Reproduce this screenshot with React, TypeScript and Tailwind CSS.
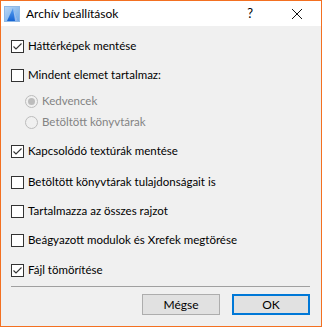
import React from 'react';

function Check({ checked }: { checked?: boolean }) {
  return (
    <span className="w-[13px] h-[13px] border border-[#333333] bg-white shrink-0 flex items-center justify-center">
      {checked && (
        <svg width="11" height="11" viewBox="0 0 11 11">
          <polyline points="1.5,5.5 4,8 9.5,2.5" fill="none" stroke="#333333" strokeWidth="1.1" />
        </svg>
      )}
    </span>
  );
}

function Radio({ checked }: { checked?: boolean }) {
  return (
    <span className="w-[13px] h-[13px] rounded-full border border-[#bcbcbc] bg-[#f0f0f0] shrink-0 flex items-center justify-center">
      {checked && <span className="w-[7px] h-[7px] rounded-full bg-[#bcbcbc]" />}
    </span>
  );
}

function CheckRow({ label, checked, className }: { label: string; checked?: boolean; className?: string }) {
  return (
    <div className={`h-4 flex items-center gap-[4px] ${className ?? ''}`}>
      <Check checked={checked} />
      <span className="text-[11.5px] text-black whitespace-nowrap leading-none">{label}</span>
    </div>
  );
}

function RadioRow({ label, checked, className }: { label: string; checked?: boolean; className?: string }) {
  return (
    <div className={`h-4 flex items-center gap-[4px] pl-[14px] ${className ?? ''}`}>
      <Radio checked={checked} />
      <span className="text-[11.5px] text-[#838383] whitespace-nowrap leading-none">{label}</span>
    </div>
  );
}

export default function App() {
  return (
    <div className="w-[322px] h-[327px] border border-[#f37021] flex flex-col bg-[#f0f0f0] font-['Lato','Noto_Sans',sans-serif]">
      {/* Title bar */}
      <div className="h-[25px] bg-white flex items-center shrink-0">
        <svg width="16" height="16" viewBox="0 0 16 16" className="ml-[3px]">
          <defs>
            <linearGradient id="g" x1="0" y1="0" x2="1" y2="1">
              <stop offset="0" stopColor="#bcd8f5" />
              <stop offset="1" stopColor="#6aa6e6" />
            </linearGradient>
            <linearGradient id="t" x1="0" y1="0" x2="0" y2="1">
              <stop offset="0" stopColor="#5aa0f0" />
              <stop offset="1" stopColor="#1464d4" />
            </linearGradient>
          </defs>
          <rect x="0.5" y="0.5" width="15" height="15" fill="url(#g)" stroke="#8fb8e6" />
          <path d="M3 15 L9 2 L14 15 Z" fill="url(#t)" />
          <path d="M9 2 L14 15 L11 15 Z" fill="#ffffff" opacity="0.5" />
        </svg>
        <span className="ml-[6px] text-[12px] text-black">Archív beállítások</span>
        <span className="ml-auto text-[13px] text-black mr-[38px]">?</span>
        <svg width="12" height="12" viewBox="0 0 12 12" className="mr-[18px]">
          <path d="M1 1 L11 11 M11 1 L1 11" stroke="#111111" strokeWidth="1" />
        </svg>
      </div>

      {/* Body */}
      <div className="flex-1 flex flex-col px-[10px]">
        <CheckRow label="Háttérképek mentése" checked className="mt-[12px]" />
        <CheckRow label="Mindent elemet tartalmaz:" className="mt-[13px]" />
        <RadioRow label="Kedvencek" checked className="mt-[10px]" />
        <RadioRow label="Betöltött könyvtárak" className="mt-[5px]" />
        <CheckRow label="Kapcsolódó textúrák mentése" checked className="mt-[13px]" />
        <CheckRow label="Betöltött könyvtárak tulajdonságait is" className="mt-[15px]" />
        <CheckRow label="Tartalmazza az összes rajzot" className="mt-[13px]" />
        <CheckRow label="Beágyazott modulok és Xrefek megtörése" className="mt-[13px]" />
        <CheckRow label="Fájl tömörítése" checked className="mt-[14px]" />

        <div className="mt-[8px] h-px bg-[#a0a0a0] mr-[1px]" />

        <div className="mt-[7px] flex justify-end gap-[12px] pr-[1px]">
          <button className="w-[78px] h-[21px] border border-[#adadad] bg-[#e1e1e1] text-[12px] text-black">Mégse</button>
          <button className="w-[78px] h-[21px] border-2 border-[#0078d7] bg-[#e1e1e1] text-[12px] text-black">OK</button>
        </div>
      </div>
    </div>
  );
}
